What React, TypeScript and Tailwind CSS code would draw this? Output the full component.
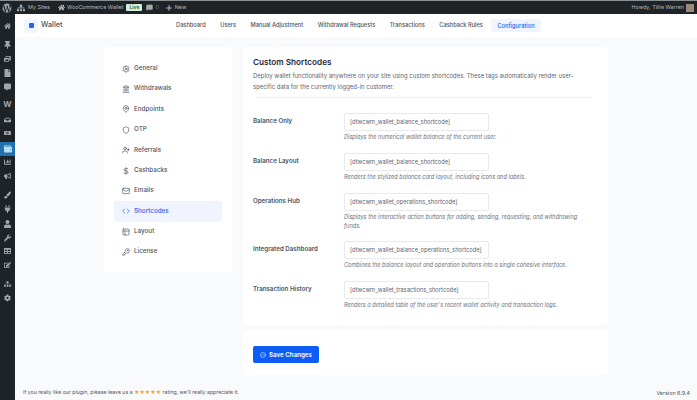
import React from "react";
import { Settings, Landmark, MapPin, Shield, UserPlus, DollarSign, Mail, Code, PanelsTopLeft, KeyRound, CircleCheck, Plus, MessageSquare } from "lucide-react";
import { FaWordpress, FaHome, FaThumbtack, FaPhotoVideo, FaFile, FaCommentAlt, FaMoneyBillAlt, FaChartBar, FaBullhorn, FaPaintBrush, FaPlug, FaUser, FaWrench, FaCog, FaSitemap, FaWallet, FaEdit, FaTable, FaInbox } from "react-icons/fa";

const side: [string, any][] = [
  ["General", Settings], ["Withdrawals", Landmark], ["Endpoints", MapPin], ["OTP", Shield], ["Referrals", UserPlus],
  ["Cashbacks", DollarSign], ["Emails", Mail], ["Shortcodes", Code], ["Layout", PanelsTopLeft], ["License", KeyRound],
];
const nav = ["Dashboard", "Users", "Manual Adjustment", "Withdrawal Requests", "Transactions", "Cashback Rules", "Configuration"];
const rows = [
  ["Balance Only", "[dtwcwm_wallet_balance_shortcode]", "Displays the numerical wallet balance of the current user."],
  ["Balance Layout", "[dtwcwm_wallet_balance_shortcode]", "Renders the stylized balance card layout, including icons and labels."],
  ["Operations Hub", "[dtwcwm_wallet_operations_shortcode]", "Displays the interactive action buttons for adding, sending, requesting, and withdrawing funds."],
  ["Integrated Dashboard", "[dtwcwm_wallet_balance_operations_shortcode]", "Combines the balance layout and operation buttons into a single cohesive interface."],
  ["Transaction History", "[dtwcwm_wallet_trasactions_shortcode]", "Renders a detailed table of the user's recent wallet activity and transaction logs."],
];
const wp: [any, string][] = [
  [FaHome, "mt-[8px]"], [FaThumbtack, "mt-[11px]"], [FaPhotoVideo, "mt-[6px]"], [FaFile, "mt-[6px]"], [FaCommentAlt, "mt-[6px]"],
];
const wp1b: [any, string][] = [[FaInbox, "mt-[7px]"], [FaMoneyBillAlt, "mt-[5px]"]];
const wp2: [any, string][] = [
  [FaChartBar, "mt-[2.5px]"], [FaBullhorn, "mt-[6px]"], [FaPaintBrush, "mt-[11px]"], [FaPlug, "mt-[6px]"], [FaUser, "mt-[7px]"],
  [FaWrench, "mt-[6px]"], [FaTable, "mt-[5px]"], [FaEdit, "mt-[6px]"], [FaSitemap, "mt-[11px]"], [FaCog, "mt-[6px]"],
];

export default function App() {
  return (
    <div className="w-[697px] h-[400px] overflow-hidden flex flex-col bg-[#f8fafc] text-[#3c434a]" style={{ fontFamily: "Inter, 'Liberation Sans', sans-serif" }}>
      <div className="h-[14px] shrink-0 bg-[#1d2327] flex items-center text-[#b4b8bc] text-[5.4px] border-t border-[#8a8f94]">
        <FaWordpress className="ml-[2px] w-[10px] h-[10px] text-[#a7aaad]" />
        <FaSitemap className="ml-[5px] w-[8px] h-[8px]" />
        <span className="ml-[3px]">My Sites</span>
        <FaHome className="ml-[8px] w-[7px] h-[7px]" />
        <span className="ml-[2px]">WooCommerce Wallet</span>
        <span className="ml-[3px] px-[3px] h-[7px] leading-[7px] rounded-[1px] bg-[#d5ecdf] text-[#1f6f43] font-semibold text-[5px]">Live</span>
        <MessageSquare className="ml-[4px] w-[7px] h-[7px] fill-[#a7aaad] text-[#a7aaad]" />
        <span className="ml-[2px] text-[#6f7479]">0</span>
        <Plus className="ml-[6px] w-[8px] h-[8px]" strokeWidth={3} />
        <span className="ml-[2px]">New</span>
        <span className="ml-auto">Howdy, Tillie Warren</span>
        <span className="ml-[2px] mr-[3px] w-[8px] h-[8px] bg-[#9c8a78]" />
      </div>
      <div className="flex-1 flex min-h-0">
        <div className="w-[15px] shrink-0 bg-[#1d2327] flex flex-col items-center text-[#a2a7ac]">
          {wp.map(([I, m], i) => <I key={i} className={`w-[7px] h-[8px] shrink-0 ${m}`} />)}
          <span className="mt-[9px] h-[9px] leading-[9px] text-[8px] font-bold">W</span>
          {wp1b.map(([I, m], i) => <I key={i} className={`w-[7px] h-[8px] shrink-0 ${m}`} />)}
          <div className="w-[15px] h-[13.5px] shrink-0 mt-[5px] bg-[#2271b1] flex items-center justify-center text-[#b9dcf5]"><FaWallet className="w-[8px] h-[8px]" /></div>
          {wp2.map(([I, m], i) => <I key={i} className={`w-[7px] h-[8px] shrink-0 ${m}`} />)}
        </div>
        <div className="flex-1 min-w-0 flex flex-col">
          <div className="h-[23px] shrink-0 bg-white flex items-center">
            <span className="ml-[9px] w-[14px] h-[14px] rounded-[3px] bg-[#eff5ff] flex items-center justify-center">
              <span className="w-[5px] h-[5px] rounded-[1px] bg-[#2563eb]" />
            </span>
            <span className="ml-[3px] text-[7.3px] font-medium text-[#4b5563]">Wallet</span>
            <div className="ml-[113.5px] flex items-center text-[5.7px] font-medium text-[#4b5563]">
              {nav.map((n, i) => (
                <span key={n} className={i === 6 ? "px-[6px] h-[13px] leading-[13px] rounded-[2px] bg-[#eff4ff] text-[#2563eb] ml-[8.5px]" : i === 0 ? "" : "ml-[14.5px]"}>{n}</span>
              ))}
            </div>
          </div>
          <div className="flex-1 flex items-start pl-[89px] pt-[10px] gap-[11px]">
            <div className="w-[128px] h-[225px] shrink-0 bg-white rounded-[4px] px-[10px] pt-[11.5px] flex flex-col">
              {side.map(([n, I]) => (
                <div key={n} className={`h-[20.4px] shrink-0 flex items-center pl-[8px] rounded-[3px] text-[6.3px] font-medium ${n === "Shortcodes" ? "bg-[#eff4ff] text-[#2563eb]" : "text-[#4b5563]"}`}>
                  <I className="w-[8px] h-[8px] mr-[4px]" strokeWidth={2} />
                  <span>{n}</span>
                </div>
              ))}
            </div>
            <div className="w-[365px] shrink-0 flex flex-col">
              <div className="h-[278px] bg-white rounded-[4px] px-[10px] pt-[10px]">
                <div className="text-[8.2px] leading-[10px] font-semibold text-[#1f2937]">Custom Shortcodes</div>
                <p className="mt-[4px] w-[335px] text-[5.95px] leading-[10.5px] text-[#5b6470]">Deploy wallet functionality anywhere on your site using custom shortcodes. These tags automatically render user-specific data for the currently logged-in customer.</p>
                <div className="mt-[5px] h-px bg-[#eef0f3] w-[336px] ml-[3px]" />
                <div className="mt-[15px] flex flex-col">
                  {rows.map((r, i) => (
                    <div key={r[0]} className={`flex shrink-0 ${i === 2 ? "h-[48px]" : "h-[40px]"}`}>
                      <div className="w-[91px] shrink-0 pt-[3px] text-[6.2px] leading-[9px] font-semibold text-[#4b5563]">{r[0]}</div>
                      <div className="w-[242px]">
                        <div className="w-[145px] h-[18px] border border-[#e7e9ed] rounded-[2px] pl-[5px] flex items-center text-[5.75px] text-[#5b6470] whitespace-nowrap">{r[1]}</div>
                        <p className="mt-[2px] text-[5.6px] leading-[9px] italic text-[#6b7280]">{r[2]}</p>
                      </div>
                    </div>
                  ))}
                </div>
              </div>
              <div className="mt-[5px] h-[45px] bg-white rounded-[4px] pl-[10px] pt-[16px] flex items-start">
                <button className="w-[66px] h-[17px] rounded-[2px] bg-[#0d5cf5] text-white text-[6.2px] font-semibold flex items-center justify-center">
                  <CircleCheck className="w-[6px] h-[6px] mr-[3px]" />Save Changes
                </button>
              </div>
            </div>
          </div>
          <div className="h-[18px] shrink-0 flex items-start pl-[8px] pr-[7px] pt-[7px] text-[5.2px] text-[#50575e]">
            <span>If you really like our plugin, please leave us a <span className="text-[#f5a623]">★★★★★</span> rating, we'll really appreciate it.</span>
            <span className="ml-auto text-[5.4px]">Version 6.9.4</span>
          </div>
        </div>
      </div>
    </div>
  );
}
